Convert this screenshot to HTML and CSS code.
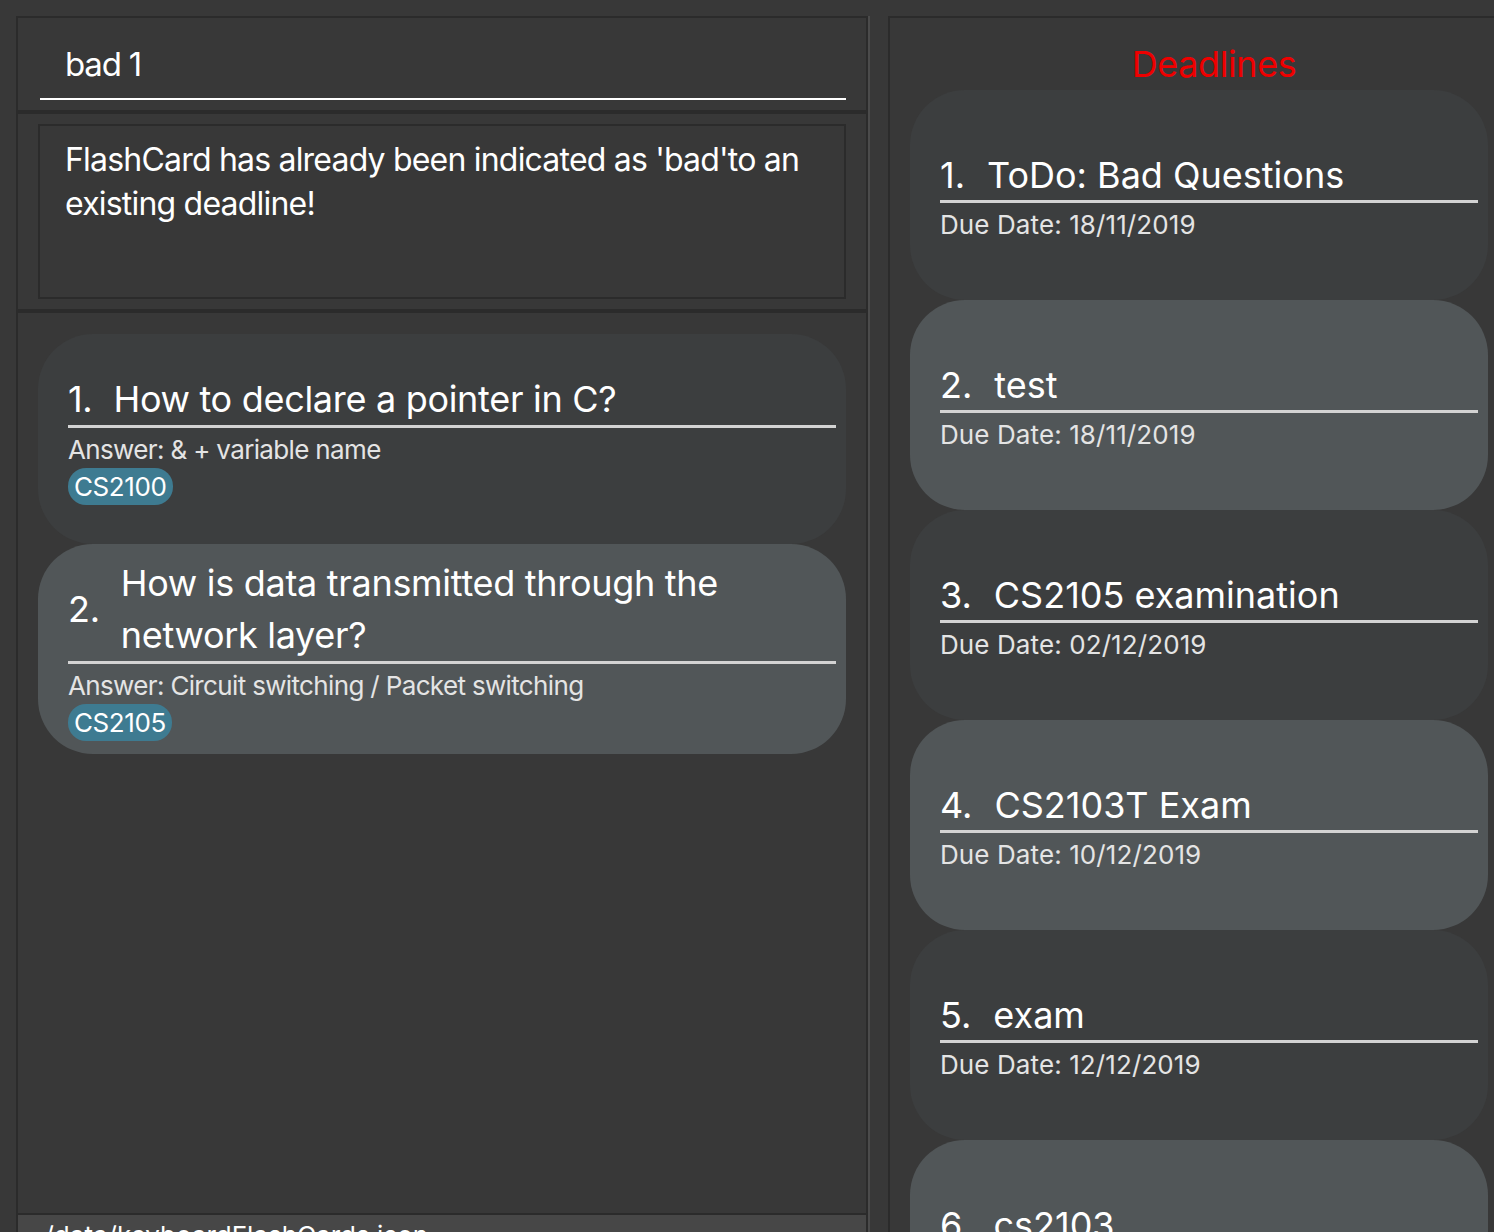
FILE: index.html
```html
<!DOCTYPE html>
<html lang="en">
<head>
<meta charset="utf-8">
<title>FlashCard</title>
<link rel="stylesheet" href="styles.css">
</head>
<body>
<div class="app">
  <div class="left">
    <div class="command-box">
      <div class="command-field">bad 1</div>
    </div>
    <div class="result-pane">
      <div class="result-box">FlashCard has already been indicated as 'bad'to an existing deadline!</div>
    </div>
    <div class="list-pane">
      <div class="card odd">
        <div class="q-row"><span class="num">1.</span><span class="q">How to declare a pointer in C?</span></div>
        <div class="answer">Answer: &amp; + variable name</div>
        <div class="tags"><span class="tag">CS2100</span></div>
      </div>
      <div class="card even">
        <div class="q-row"><span class="num">2.</span><span class="q">How is data transmitted through the network layer?</span></div>
        <div class="answer">Answer: Circuit switching / Packet switching</div>
        <div class="tags"><span class="tag">CS2105</span></div>
      </div>
    </div>
    <div class="status">./data/keyboardFlashCards.json</div>
  </div>
  <div class="splitter"></div>
  <div class="right">
    <div class="title">Deadlines</div>
    <div class="dl-list">
      <div class="card dl odd">
        <div class="q-row"><span class="num">1.</span><span class="q">ToDo: Bad Questions</span></div>
        <div class="answer">Due Date: 18/11/2019</div>
      </div>
      <div class="card dl even">
        <div class="q-row"><span class="num">2.</span><span class="q">test</span></div>
        <div class="answer">Due Date: 18/11/2019</div>
      </div>
      <div class="card dl odd">
        <div class="q-row"><span class="num">3.</span><span class="q">CS2105 examination</span></div>
        <div class="answer">Due Date: 02/12/2019</div>
      </div>
      <div class="card dl even">
        <div class="q-row"><span class="num">4.</span><span class="q">CS2103T Exam</span></div>
        <div class="answer">Due Date: 10/12/2019</div>
      </div>
      <div class="card dl odd">
        <div class="q-row"><span class="num">5.</span><span class="q">exam</span></div>
        <div class="answer">Due Date: 12/12/2019</div>
      </div>
      <div class="card dl even">
        <div class="q-row"><span class="num">6.</span><span class="q">cs2103</span></div>
        <div class="answer">Due Date: 13/12/2019</div>
      </div>
    </div>
  </div>
</div>
</body>
</html>
```
FILE: styles.css
```css
* { box-sizing: border-box; }
html, body {
  margin: 0;
  padding: 0;
  background: #383838;
  height: 100%;
  overflow: hidden;
}
body {
  font-family: Inter, "Open Sans", sans-serif;
  color: #ffffff;
}
.app {
  display: flex;
  align-items: flex-start;
  padding: 16px 0 0 16px;
  height: 1232px;
}
.left {
  width: 852px;
  flex: none;
  display: flex;
  flex-direction: column;
  border-left: 2px solid #2b2b2b;
  border-top: 2px solid #2b2b2b;
  border-right: 2px solid #2b2b2b;
}
.command-box {
  height: 94px;
  border-bottom: 2px solid #2b2b2b;
  padding: 0 20px 0 22px;
}
.command-field {
  height: 82px;
  border-bottom: 2px solid #ffffff;
  padding: 26px 0 0 25px;
  font-size: 33px;
  line-height: 40px;
  letter-spacing: -1.2px;
}
.result-pane {
  height: 199px;
  border-top: 2px solid #2b2b2b;
  border-bottom: 2px solid #2b2b2b;
  padding: 10px 20px 10px 20px;
}
.result-box {
  height: 175px;
  border: 2px solid #2b2b2b;
  padding: 12px 20px 0 25px;
  font-size: 32px;
  line-height: 44px;
  letter-spacing: -0.8px;
}
.list-pane {
  height: 904px;
  flex: none;
  border-top: 2px solid #2b2b2b;
  border-bottom: 2px solid #2b2b2b;
  padding: 21px 20px 0 20px;
}
.card {
  min-height: 210px;
  border-radius: 55px;
  display: flex;
  flex-direction: column;
  justify-content: center;
  padding: 13px 10px 13px 30px;
}
.card.odd { background: #3c3e3f; }
.card.even { background: #515658; }
.q-row {
  display: flex;
  align-items: center;
  border-bottom: 3px solid #d3d3d3;
  font-size: 36px;
  line-height: 52px;
  letter-spacing: -0.3px;
}
.num {
  flex: none;
  padding: 0 21px 0 0;
}
.q { flex: 1; }
.answer {
  margin-top: 6px;
  font-size: 26px;
  line-height: 32px;
  color: #e4e4e4;
  letter-spacing: -0.65px;
}
.tags {
  display: flex;
  margin-top: 2px;
}
.tag {
  background: #3e7b91;
  border-radius: 18px;
  font-size: 26px;
  line-height: 37px;
  padding: 0 6px;
  color: #ffffff;
  letter-spacing: -0.4px;
}
.status {
  height: 40px;
  background: #474747;
  padding: 5px 0 0 19px;
  font-size: 26px;
  line-height: 32px;
}
.splitter {
  width: 2px;
  height: 1216px;
  flex: none;
  background: #4b4b4b;
}
.right {
  margin-left: 18px;
  width: 650px;
  height: 1300px;
  flex: none;
  border-left: 2px solid #2b2b2b;
  border-top: 2px solid #2b2b2b;
  padding: 0 0 0 20px;
}
.title {
  width: 608px;
  text-align: center;
  color: #ee0000;
  font-size: 36px;
  line-height: 44px;
  padding-top: 24px;
  height: 72px;
  letter-spacing: -0.4px;
}
.dl-list {
  width: 578px;
}
.card.dl {
  padding: 14px 10px 14px 30px;
}
.card.dl .q-row {
  line-height: 50px;
  letter-spacing: 0;
}
.card.dl .num {
  padding-right: 22px;
}
.card.dl .answer {
  letter-spacing: 0.1px;
}
```
